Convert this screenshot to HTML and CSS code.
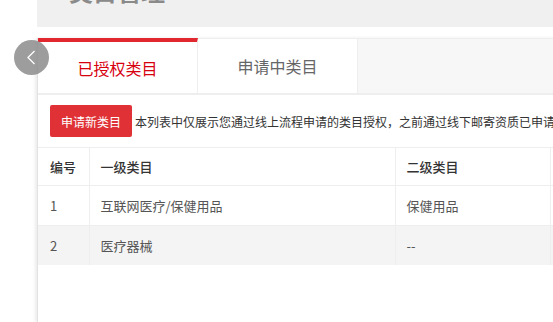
FILE: index.html
```html
<!DOCTYPE html>
<html lang="zh-CN">
<head>
<meta charset="utf-8">
<title>类目管理</title>
<link rel="stylesheet" href="styles.css">
</head>
<body>
<div class="page">
  <div class="header"><h1 class="title">类目管理</h1></div>
  <div class="panel">
    <div class="tabs">
      <div class="tab active">已授权类目</div>
      <div class="tab">申请中类目</div>
    </div>
    <div class="content">
      <div class="toolbar">
        <button class="btn">申请新类目</button>
        <span class="desc">本列表中仅展示您通过线上流程申请的类目授权，之前通过线下邮寄资质已申请的类目不在此列表中展示</span>
      </div>
      <table class="grid">
        <colgroup>
          <col class="c1"><col class="c2"><col class="c3"><col class="c4">
        </colgroup>
        <thead>
          <tr><th>编号</th><th>一级类目</th><th>二级类目</th><th></th></tr>
        </thead>
        <tbody>
          <tr><td>1</td><td>互联网医疗/保健用品</td><td>保健用品</td><td></td></tr>
          <tr class="alt"><td>2</td><td>医疗器械</td><td>--</td><td></td></tr>
        </tbody>
      </table>
    </div>
  </div>
</div>
<div class="back">
  <svg width="35" height="35" viewBox="0 0 35 35"><polyline points="20.5,11 14,17.5 20.5,24" fill="none" stroke="#fff" stroke-width="1.3"/></svg>
</div>
</body>
</html>
```
FILE: styles.css
```css
html, body {
  margin: 0;
  height: 100%;
  overflow: hidden;
  background: #fff;
}
body {
  font-family: "Noto Sans CJK SC", "Noto Sans", sans-serif;
  color: #333;
}
.page {
  margin-left: 37px;
  height: 100%;
  display: flex;
  flex-direction: column;
}
.header {
  height: 27px;
  flex: none;
  background: #f0f0f0;
  padding-left: 32px;
  overflow: hidden;
}
.title {
  margin: -21px 0 0;
  font-size: 24px;
  line-height: 24px;
  font-weight: bold;
  color: #8a8a8a;
}
.panel {
  margin-top: 11px;
  flex: 1;
  border-left: 1px solid #e2e2e2;
  box-shadow: -2px 0 3px rgba(0, 0, 0, 0.08);
  width: 700px;
}
.tabs {
  display: flex;
  height: 54px;
  border-top: 1px solid #eee;
  border-bottom: 2px solid #eee;
  background: #f7f7f7;
}
.tab {
  width: 160px;
  box-sizing: border-box;
  background: #fff;
  border-right: 1px solid #eee;
  display: flex;
  align-items: center;
  justify-content: center;
  font-size: 16px;
  color: #666;
}
.tab.active {
  margin-top: -1px;
  border-top: 4px solid #e0282e;
  color: #d7000f;
}
.content {
  padding-top: 10px;
}
.toolbar {
  display: flex;
  align-items: center;
  gap: 3px;
  padding-left: 12px;
}
.btn {
  height: 32px;
  padding: 0 11px;
  border: 0;
  border-radius: 2px;
  background: #e03236;
  color: #fff;
  font-family: inherit;
  font-size: 12px;
}
.desc {
  font-size: 12px;
  color: #333;
  white-space: nowrap;
}
.grid {
  margin-top: 10px;
  border-collapse: collapse;
  table-layout: fixed;
  width: 712px;
  font-size: 13px;
}
.c1 { width: 51px; }
.c2 { width: 306px; }
.c3 { width: 155px; }
.c4 { width: 200px; }
.grid th, .grid td {
  text-align: left;
  padding: 0 11px;
  border: 1px solid #eee;
  white-space: nowrap;
}
.grid th:first-child, .grid td:first-child {
  border-left: 0;
  padding-left: 12px;
}
.grid th {
  height: 37px;
  font-weight: 500;
  color: #333;
}
.grid td {
  height: 39px;
  color: #555;
}
.grid tbody tr:last-child td {
  border-bottom: 0;
}
.grid .alt td {
  background: #f4f4f4;
}
.back {
  position: absolute;
  left: 14px;
  top: 40px;
  width: 35px;
  height: 35px;
  border-radius: 50%;
  background: rgba(140, 140, 140, 0.85);
}
.back svg { display: block; }
```
